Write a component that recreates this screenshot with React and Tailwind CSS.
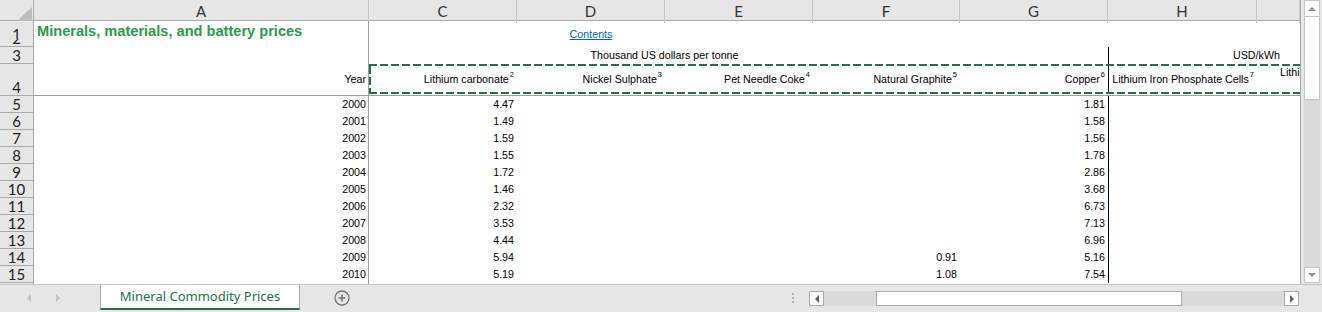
import React from 'react';

const COLS = 'grid grid-cols-[34px_335px_148px_148px_148px_147px_148px_149px_43px]';

const prices = [
  ['2000', '4.47', '', '1.81'],
  ['2001', '1.49', '', '1.58'],
  ['2002', '1.59', '', '1.56'],
  ['2003', '1.55', '', '1.78'],
  ['2004', '1.72', '', '2.86'],
  ['2005', '1.46', '', '3.68'],
  ['2006', '2.32', '', '6.73'],
  ['2007', '3.53', '', '7.13'],
  ['2008', '4.44', '', '6.96'],
  ['2009', '5.94', '0.91', '5.16'],
  ['2010', '5.19', '1.08', '7.54'],
];

const Sup = ({ children }) => (
  <span className="text-[7.5px] leading-none relative -top-[4px] ml-[1px]">{children}</span>
);

function RowNum({ n }) {
  return (
    <div className="bg-[#e6e6e6] border-r border-b border-[#ababab] flex items-end justify-center overflow-hidden font-['Lato',sans-serif] text-[15px] leading-[16px] text-[#222]">
      {n}
    </div>
  );
}

const dashX = 'bg-[repeating-linear-gradient(90deg,#217346_0_8px,transparent_8px_11px)]';
const dashY = 'bg-[repeating-linear-gradient(180deg,#217346_0_8px,transparent_8px_11px)]';

function Sheet() {
  return (
    <div className="w-[1301px] h-full bg-white border-r border-[#ababab] flex flex-col overflow-hidden text-[10.7px] text-black">
      {/* column letters */}
      <div className={`${COLS} h-[21px] shrink-0 bg-[#e6e6e6] border-b border-[#ababab]`}>
        <div className="border-r border-[#ababab] flex items-end justify-end pr-[1px] pb-[2px]">
          <svg width="15" height="14" viewBox="0 0 15 14">
            <polygon points="0,14 15,14 15,0" fill="#bcbcbc" />
          </svg>
        </div>
        {['A', 'C', 'D', 'E', 'F', 'G', 'H', ''].map((l, i) => (
          <div
            key={i}
            className="border-r border-[#c6c6c6] flex items-center justify-center font-['Lato',sans-serif] text-[15px] text-[#333]"
          >
            {l}
          </div>
        ))}
      </div>

      {/* row 1 */}
      <div className={`${COLS} h-[18px] shrink-0`}>
        <RowNum n={1} />
        <div className="border-r border-[#9e9e9e] flex items-center pl-[3px] whitespace-nowrap font-bold text-[14.6px] text-[#2e9a4c]">
          Minerals, materials, and battery prices
        </div>
        <div />
        <div className="flex items-end justify-center pb-[1px]">
          <span className="text-[#0563c1] underline">Contents</span>
        </div>
        <div />
        <div />
        <div />
        <div />
        <div />
      </div>

      {/* row 2 */}
      <div className={`${COLS} h-[8px] shrink-0`}>
        <RowNum n={2} />
        <div className="border-r border-[#9e9e9e]" />
      </div>

      {/* row 3 */}
      <div className={`${COLS} h-[17px] shrink-0`}>
        <RowNum n={3} />
        <div className="border-r border-[#9e9e9e]" />
        <div className="col-span-4 flex items-center justify-center whitespace-nowrap">
          Thousand US dollars per tonne
        </div>
        <div />
        <div className="col-span-2 border-l border-black flex items-center pl-[124px] whitespace-nowrap">
          USD/kWh
        </div>
      </div>

      {/* row 4 */}
      <div className={`${COLS} h-[32px] shrink-0`}>
        <RowNum n={4} />
        <div className="border-r border-b border-[#9e9e9e] flex items-center justify-end pr-[2px]">Year</div>
        <div className="col-span-7 flex flex-col border-b border-[#9e9e9e]">
          <div className={`h-[2px] ${dashX}`} />
          <div className="flex-1 flex">
            <div className={`w-[2px] ${dashY}`} />
            <div className="flex-1 grid grid-cols-[146px_148px_148px_147px_148px_149px_43px]">
              <div className="flex items-center justify-end pr-[3px] whitespace-nowrap">
                Lithium carbonate<Sup>2</Sup>
              </div>
              <div className="flex items-center justify-end pr-[3px] whitespace-nowrap">
                Nickel Sulphate<Sup>3</Sup>
              </div>
              <div className="flex items-center justify-end pr-[3px] whitespace-nowrap">
                Pet Needle Coke<Sup>4</Sup>
              </div>
              <div className="flex items-center justify-end pr-[3px] whitespace-nowrap">
                Natural Graphite<Sup>5</Sup>
              </div>
              <div className="flex items-center justify-end pr-[3px] whitespace-nowrap">
                Copper<Sup>6</Sup>
              </div>
              <div className="border-l border-black flex items-center justify-end pr-[3px] whitespace-nowrap">
                Lithium Iron Phosphate Cells<Sup>7</Sup>
              </div>
              <div className="pl-[23px] whitespace-nowrap overflow-hidden leading-[12px]">
                Lithium Nickel Manganese Cobalt Oxide Cells
              </div>
            </div>
          </div>
          <div className={`h-[2px] mb-[1px] ${dashX}`} />
        </div>
      </div>

      {/* data */}
      {prices.map(([yr, li, gr, cu], i) => (
        <div key={yr} className={`${COLS} h-[17px] shrink-0`}>
          <RowNum n={i + 5} />
          <div className="border-r border-[#9e9e9e] flex items-center justify-end pr-[2px]">{yr}</div>
          <div className="flex items-center justify-end pr-[3px]">{li}</div>
          <div />
          <div />
          <div className="flex items-center justify-end pr-[3px]">{gr}</div>
          <div className="flex items-center justify-end pr-[3px]">{cu}</div>
          <div className="border-l border-black" />
          <div />
        </div>
      ))}
      <div className={`${COLS} flex-1`}>
        <div className="bg-[#e6e6e6] border-r border-[#ababab]" />
        <div className="border-r border-[#9e9e9e]" />
      </div>
    </div>
  );
}

function VScroll() {
  return (
    <div className="flex-1 flex pl-[3px]">
      <div className="w-[16px] h-[283px] flex flex-col">
        <div className="h-[17px] bg-white border border-[#c6c6c6] flex items-center justify-center">
          <span className="w-0 h-0 border-x-[4px] border-x-transparent border-b-[4px] border-b-[#909090]" />
        </div>
        <div className="flex-1 bg-[#dadada] flex flex-col">
          <div className="h-[83px] bg-white border-x border-b border-[#c6c6c6]" />
        </div>
        <div className="h-[16px] bg-white border border-[#c6c6c6] flex items-center justify-center">
          <span className="w-0 h-0 border-x-[4px] border-x-transparent border-t-[4px] border-t-[#909090]" />
        </div>
      </div>
    </div>
  );
}

function BottomBar() {
  return (
    <div className="h-[28px] shrink-0 flex items-start border-t border-[#c6c6c6]">
      <div className="w-[100px] h-[25px] flex items-center">
        <span className="ml-[27px] w-0 h-0 border-y-[4px] border-y-transparent border-r-[4px] border-r-[#c2c2c2]" />
        <span className="ml-[25px] w-0 h-0 border-y-[4px] border-y-transparent border-l-[4px] border-l-[#c2c2c2]" />
      </div>
      <div className="w-[200px] h-[25px] bg-white border-x border-[#ababab] border-b-2 border-b-[#217346] flex items-center justify-center font-['Noto_Sans',sans-serif] text-[13px] text-[#217346]">
        Mineral Commodity Prices
      </div>
      <svg className="ml-[34px] mt-[5px]" width="16" height="16" viewBox="0 0 16 16">
        <circle cx="8" cy="8" r="7" fill="none" stroke="#777" strokeWidth="1.3" />
        <path d="M8 4.5v7M4.5 8h7" stroke="#777" strokeWidth="1.6" />
      </svg>
      <div className="ml-[442px] mt-[8px] flex flex-col gap-[2px]">
        <span className="w-[2px] h-[2px] bg-[#b0b0b0]" />
        <span className="w-[2px] h-[2px] bg-[#b0b0b0]" />
        <span className="w-[2px] h-[2px] bg-[#b0b0b0]" />
      </div>
      <div className="ml-[15px] mt-[6px] flex h-[15px]">
        <div className="w-[15px] bg-white border border-[#ababab] flex items-center justify-center">
          <span className="w-0 h-0 border-y-[4px] border-y-transparent border-r-[4px] border-r-[#606060]" />
        </div>
        <div className="w-[460px] bg-[#dadada] flex">
          <div className="ml-[52px] w-[306px] bg-white border border-[#ababab]" />
        </div>
        <div className="w-[15px] bg-white border border-[#ababab] flex items-center justify-center">
          <span className="w-0 h-0 border-y-[4px] border-y-transparent border-l-[4px] border-l-[#606060]" />
        </div>
      </div>
    </div>
  );
}

export default function App() {
  return (
    <div className="w-[1322px] h-[312px] overflow-hidden bg-[#e6e6e6] flex flex-col font-['Liberation_Sans',Arial,sans-serif]">
      <div className="flex h-[284px] shrink-0">
        <Sheet />
        <VScroll />
      </div>
      <BottomBar />
    </div>
  );
}
